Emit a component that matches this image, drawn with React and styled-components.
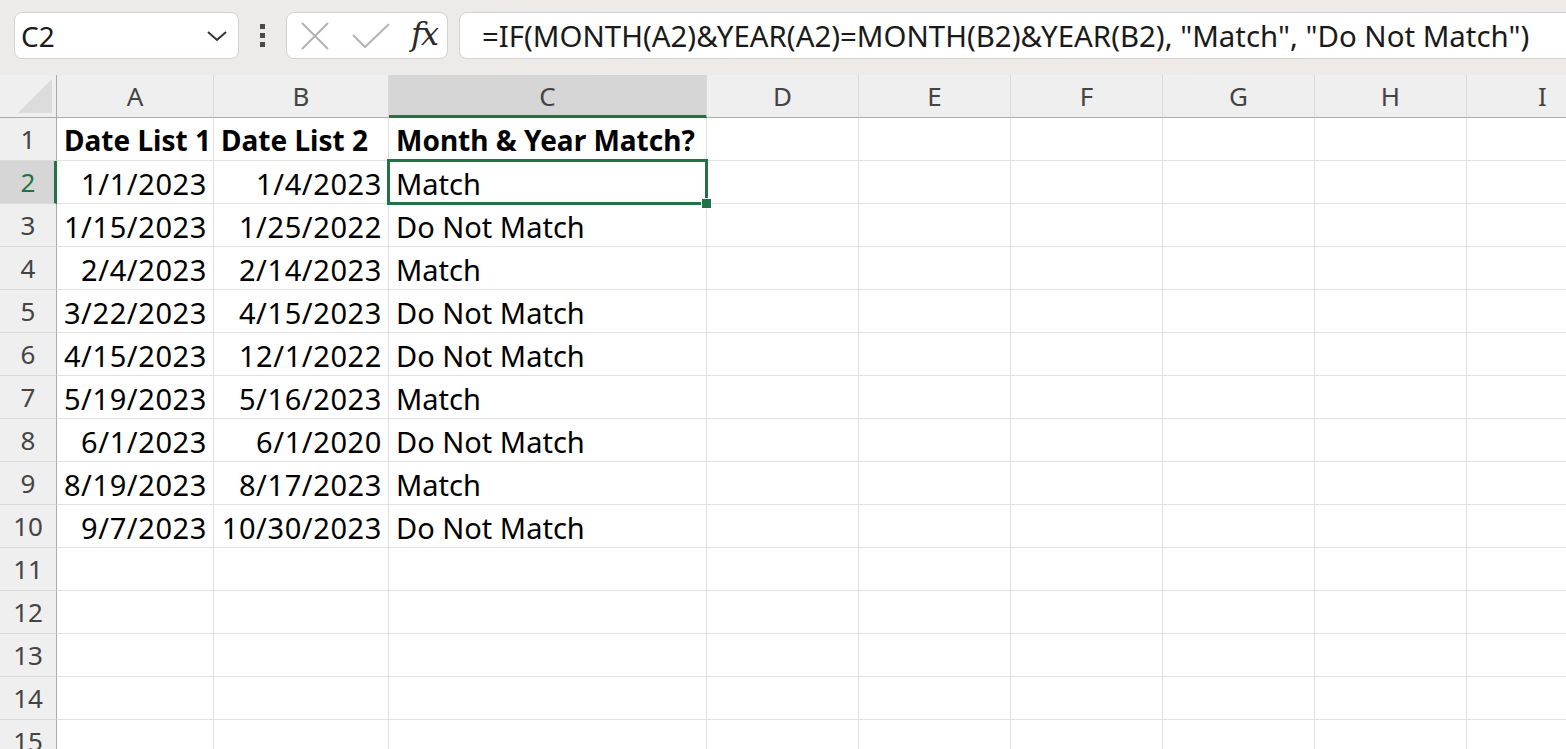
import React from 'react'
import styled, { createGlobalStyle } from 'styled-components'

const GlobalStyle = createGlobalStyle`
  html, body {
    margin: 0;
    padding: 0;
    background: #fff;
    overflow: hidden;
  }
  * { box-sizing: border-box; }
`

const GREEN = '#217346'

const Page = styled.div`
  width: 1566px;
  height: 749px;
  overflow: hidden;
  font-family: "Noto Sans", "Open Sans", sans-serif;
  display: flex;
  flex-direction: column;
`

const FormulaBar = styled.div`
  height: 75px;
  flex: none;
  background: linear-gradient(to right, #ecebe9, #efeae8);
  display: flex;
  align-items: flex-start;
  padding: 12px 0 0 14px;
  overflow: hidden;
`

const Box = styled.div`
  height: 47px;
  background: #fff;
  border: 1px solid #d3d1cf;
  border-radius: 8px;
  display: flex;
  align-items: center;
`

const NameBox = styled(Box)`
  width: 225px;
  padding: 0 10px 0 6px;
  justify-content: space-between;
  font-size: 28px;
  color: #1a1a1a;
`

const Dots = styled.div`
  width: 47px;
  height: 47px;
  display: flex;
  flex-direction: column;
  align-items: center;
  justify-content: center;
  gap: 4px;

  span {
    width: 5px;
    height: 5px;
    background: #4a4a4a;
  }
`

const FxBox = styled(Box)`
  width: 162px;
  padding: 0 10px 0 12px;
  justify-content: space-between;
`

const Fx = styled.span`
  font-family: "DejaVu Serif", "Liberation Serif", serif;
  font-style: italic;
  font-size: 32px;
  color: #2b2b2b;
  letter-spacing: -2px;
  margin-top: -4px;
`

const FormulaInput = styled(Box)`
  flex: 1;
  margin-left: 11px;
  margin-right: -20px;
  border-top-right-radius: 0;
  border-bottom-right-radius: 0;
  padding-left: 22px;
  font-size: 29.4px;
  color: #1a1a1a;
  white-space: nowrap;
`

const Sheet = styled.div`
  flex: 1;
  display: grid;
  grid-template-columns: 57px 157px 175px 318px repeat(6, 152px);
  grid-auto-rows: 43px;
  overflow: hidden;
  background: #fff;
`

const Corner = styled.div`
  background: #efefef;
  border-right: 1px solid #ababab;
  border-bottom: 1px solid #ababab;
  display: flex;
  align-items: flex-end;
  justify-content: flex-end;
  padding: 0 4px 4px 0;

  svg { display: block; }
`

const ColHead = styled.div`
  background: ${p => (p.$active ? '#d6d6d6' : '#efefef')};
  border-right: 1px solid #d9d9d9;
  border-bottom: ${p => (p.$active ? `3px solid ${GREEN}` : '1px solid #ababab')};
  display: flex;
  align-items: center;
  justify-content: center;
  font-size: 26px;
  color: #444;
  padding-top: ${p => (p.$active ? '2px' : '0')};
`

const RowHead = styled.div`
  background: ${p => (p.$active ? '#d6d6d6' : '#efefef')};
  border-right: ${p => (p.$active ? `3px solid ${GREEN}` : '1px solid #ababab')};
  border-bottom: 1px solid #dadada;
  display: flex;
  align-items: center;
  justify-content: center;
  font-size: 26px;
  color: ${p => (p.$active ? GREEN : '#444')};
  padding-left: ${p => (p.$active ? '2px' : '0')};
`

const Cell = styled.div`
  position: relative;
  z-index: ${p => (p.$selected ? 2 : 'auto')};
  border-right: 1px solid #e1e1e1;
  border-bottom: 1px solid #e1e1e1;
  display: flex;
  align-items: center;
  justify-content: ${p => (p.$right ? 'flex-end' : 'flex-start')};
  padding: 2px 6px 0 7px;
  font-size: ${p => (p.$bold ? '28px' : '29px')};
  font-weight: ${p => (p.$bold ? 700 : 400)};
  letter-spacing: ${p => (p.$right ? '0.6px' : '0')};
  color: #000;
  white-space: nowrap;
`

const Selection = styled.div`
  position: absolute;
  left: -2px;
  top: -2px;
  right: -2px;
  bottom: -2px;
  border: 3px solid ${GREEN};
  pointer-events: none;
`

const Handle = styled.div`
  position: absolute;
  right: -7px;
  bottom: -7px;
  width: 11px;
  height: 11px;
  background: ${GREEN};
  border: 1px solid #fff;
`

const columns = ['A', 'B', 'C', 'D', 'E', 'F', 'G', 'H', 'I']

const data = [
  ['Date List 1', 'Date List 2', 'Month & Year Match?'],
  ['1/1/2023', '1/4/2023', 'Match'],
  ['1/15/2023', '1/25/2022', 'Do Not Match'],
  ['2/4/2023', '2/14/2023', 'Match'],
  ['3/22/2023', '4/15/2023', 'Do Not Match'],
  ['4/15/2023', '12/1/2022', 'Do Not Match'],
  ['5/19/2023', '5/16/2023', 'Match'],
  ['6/1/2023', '6/1/2020', 'Do Not Match'],
  ['8/19/2023', '8/17/2023', 'Match'],
  ['9/7/2023', '10/30/2023', 'Do Not Match'],
]

const Chevron = () => (
  <svg width="22" height="14" viewBox="0 0 22 14">
    <path d="M2 3 L11 11 L20 3" fill="none" stroke="#333" strokeWidth="2" />
  </svg>
)

const Cross = () => (
  <svg width="32" height="32" viewBox="0 0 32 32">
    <path d="M3 3 L29 29 M29 3 L3 29" stroke="#b3b3b3" strokeWidth="2" fill="none" />
  </svg>
)

const Check = () => (
  <svg width="40" height="30" viewBox="0 0 40 30">
    <path d="M2 14 L14 26 L38 3" stroke="#b3b3b3" strokeWidth="2" fill="none" />
  </svg>
)

const App = () => {
  const rows = []
  for (let r = 1; r <= 15; r++) {
    const values = data[r - 1] || []
    rows.push(
      <React.Fragment key={r}>
        <RowHead $active={r === 2}>{r}</RowHead>
        {columns.map((c, i) => {
          const v = values[i]
          const selected = r === 2 && c === 'C'
          return (
            <Cell key={c} $bold={r === 1} $right={r > 1 && i < 2} $selected={selected}>
              {v}
              {selected && (
                <Selection>
                  <Handle />
                </Selection>
              )}
            </Cell>
          )
        })}
      </React.Fragment>
    )
  }

  return (
    <Page>
      <GlobalStyle />
      <FormulaBar>
        <NameBox>
          <span>C2</span>
          <Chevron />
        </NameBox>
        <Dots>
          <span />
          <span />
          <span />
        </Dots>
        <FxBox>
          <Cross />
          <Check />
          <Fx>fx</Fx>
        </FxBox>
        <FormulaInput>
          =IF(MONTH(A2)&amp;YEAR(A2)=MONTH(B2)&amp;YEAR(B2), "Match", "Do Not Match")
        </FormulaInput>
      </FormulaBar>
      <Sheet>
        <Corner>
          <svg width="34" height="34" viewBox="0 0 34 34">
            <polygon points="34,0 34,34 0,34" fill="#dcdcdc" />
          </svg>
        </Corner>
        {columns.map(c => (
          <ColHead key={c} $active={c === 'C'}>{c}</ColHead>
        ))}
        {rows}
      </Sheet>
    </Page>
  )
}

export default App
